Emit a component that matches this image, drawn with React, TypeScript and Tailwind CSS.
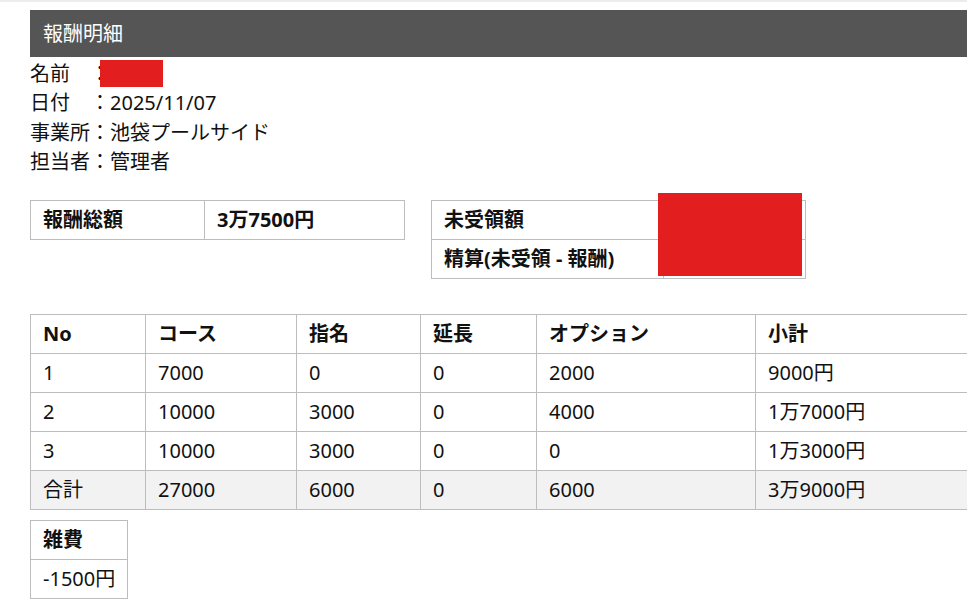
const FONT = "font-['Noto_Sans','Noto_Sans_CJK_JP',sans-serif]";

const rows = [
  { no: "1", course: "7000", shimei: "0", encho: "0", option: "2000", subtotal: "9000円" },
  { no: "2", course: "10000", shimei: "3000", encho: "0", option: "4000", subtotal: "1万7000円" },
  { no: "3", course: "10000", shimei: "3000", encho: "0", option: "0", subtotal: "1万3000円" },
];

const cell = "h-[39px] whitespace-nowrap border border-[#bdbdbd] px-[12px] text-left align-middle";

export default function App() {
  return (
    <div className={`relative h-[601px] w-[967px] overflow-hidden bg-white text-[20px] text-[#111] ${FONT}`}>
      <div className="h-[10px] border-t-2 border-[#ececec]" />

      <div className="ml-[30px] flex h-[47px] w-[960px] items-center bg-[#555555] pl-[13px] text-white">
        報酬明細
      </div>

      <div className="ml-[30px] pt-[2px] leading-[29.4px]">
        <div className="relative">
          名前　：
          <span className="absolute left-[70px] top-[1px] h-[27px] w-[63px] bg-[#e31e1e]" />
        </div>
        <div>日付　：2025/11/07</div>
        <div>事業所：池袋プールサイド</div>
        <div>担当者：管理者</div>
      </div>

      <div className="ml-[30px] mt-[23px] flex items-start gap-[26px]">
        <table className="w-[375px] border-collapse font-bold">
          <tbody>
            <tr>
              <td className={`${cell} w-[174px]`}>報酬総額</td>
              <td className={cell}>3万7500円</td>
            </tr>
          </tbody>
        </table>

        <div className="relative">
          <table className="w-[375px] border-collapse font-bold">
            <tbody>
              <tr>
                <td className={`${cell} w-[232px]`}>未受領額</td>
                <td className={cell}></td>
              </tr>
              <tr>
                <td className={cell}>精算(未受領 - 報酬)</td>
                <td className={cell}></td>
              </tr>
            </tbody>
          </table>
          <span className="absolute left-[227px] top-[-7px] h-[83px] w-[144px] bg-[#e31e1e]" />
        </div>
      </div>

      <table className="ml-[30px] mt-[35px] w-[1000px] table-fixed border-collapse">
        <colgroup>
          <col className="w-[115px]" />
          <col className="w-[151px]" />
          <col className="w-[124px]" />
          <col className="w-[116px]" />
          <col className="w-[219px]" />
          <col />
        </colgroup>
        <thead>
          <tr className="font-bold">
            <th className={cell}>No</th>
            <th className={cell}>コース</th>
            <th className={cell}>指名</th>
            <th className={cell}>延長</th>
            <th className={cell}>オプション</th>
            <th className={cell}>小計</th>
          </tr>
        </thead>
        <tbody>
          {rows.map((r) => (
            <tr key={r.no}>
              <td className={cell}>{r.no}</td>
              <td className={cell}>{r.course}</td>
              <td className={cell}>{r.shimei}</td>
              <td className={cell}>{r.encho}</td>
              <td className={cell}>{r.option}</td>
              <td className={cell}>{r.subtotal}</td>
            </tr>
          ))}
          <tr className="bg-[#f2f2f2]">
            <td className={cell}>合計</td>
            <td className={cell}>27000</td>
            <td className={cell}>6000</td>
            <td className={cell}>0</td>
            <td className={cell}>6000</td>
            <td className={cell}>3万9000円</td>
          </tr>
        </tbody>
      </table>

      <table className="ml-[30px] mt-[10px] w-[98px] table-fixed border-collapse">
        <tbody>
          <tr>
            <th className={`${cell} font-bold`}>雑費</th>
          </tr>
          <tr>
            <td className={cell}>-1500円</td>
          </tr>
        </tbody>
      </table>
    </div>
  );
}
